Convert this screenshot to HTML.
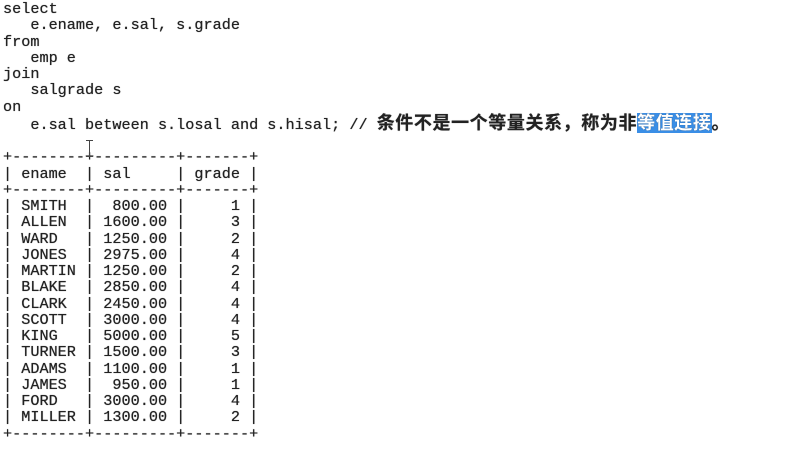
<!DOCTYPE html>
<html><head><meta charset="utf-8"><style>
html,body{margin:0;padding:0;background:#fff;width:792px;height:453px;overflow:hidden}
pre{margin:0;position:absolute;left:3px;top:1px;font-family:"Liberation Mono",monospace;font-size:15.2px;line-height:16.25px;color:#222;font-weight:normal;text-shadow:0 0 0.6px #222}
.cj{font-family:"Liberation Sans","Noto Sans CJK SC",sans-serif;font-size:18px;font-weight:bold;letter-spacing:0.6px;color:#222}
.hl{background:#3a8ee6;color:#fff}
.cur{position:absolute;left:89px;top:140px;width:1px;height:17px;background:#444}
.cur:before,.cur:after{content:"";position:absolute;left:-3px;width:7px;height:1px;background:#444}
.cur:before{top:0}.cur:after{bottom:0}
</style></head><body>
<pre>select
   e.ename, e.sal, s.grade
from
   emp e
join
   salgrade s
on
   e.sal between s.losal and s.hisal; // <span class="cj">条件不是一个等量关系，称为非<span class="hl">等值连接</span>。</span>

+--------+---------+-------+
| ename  | sal     | grade |
+--------+---------+-------+
| SMITH  |  800.00 |     1 |
| ALLEN  | 1600.00 |     3 |
| WARD   | 1250.00 |     2 |
| JONES  | 2975.00 |     4 |
| MARTIN | 1250.00 |     2 |
| BLAKE  | 2850.00 |     4 |
| CLARK  | 2450.00 |     4 |
| SCOTT  | 3000.00 |     4 |
| KING   | 5000.00 |     5 |
| TURNER | 1500.00 |     3 |
| ADAMS  | 1100.00 |     1 |
| JAMES  |  950.00 |     1 |
| FORD   | 3000.00 |     4 |
| MILLER | 1300.00 |     2 |
+--------+---------+-------+</pre>
<div class="cur"></div>
</body></html>
